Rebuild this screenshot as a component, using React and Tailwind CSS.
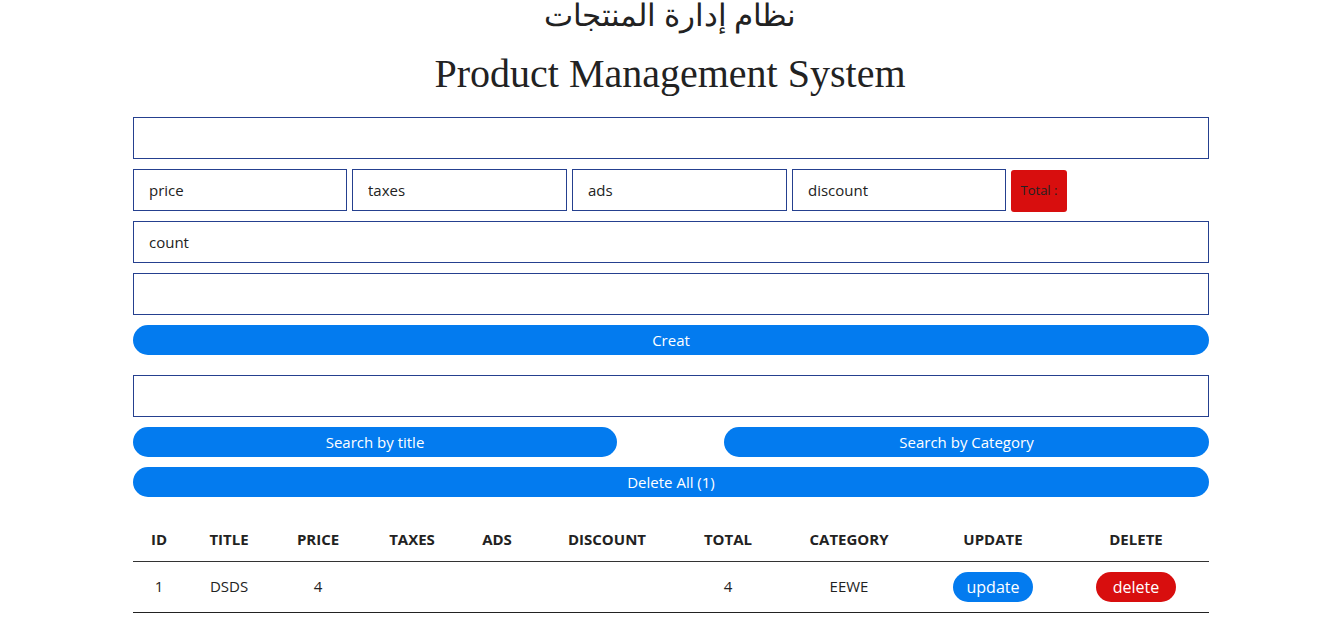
import React from "react";

const rows = [
  { id: 1, title: "DSDS", price: "4", taxes: "", ads: "", discount: "", total: "4", category: "EEWE" },
];

const cols = [
  { key: "id", label: "ID", w: "w-[52px]" },
  { key: "title", label: "TITLE", w: "w-[88px]" },
  { key: "price", label: "PRICE", w: "w-[90px]" },
  { key: "taxes", label: "TAXES", w: "w-[98px]" },
  { key: "ads", label: "ADS", w: "w-[72px]" },
  { key: "discount", label: "DISCOUNT", w: "w-[148px]" },
  { key: "total", label: "TOTAL", w: "w-[94px]" },
  { key: "category", label: "CATEGORY", w: "w-[148px]" },
];

function Field({ placeholder = "", className = "" }) {
  return (
    <input
      type="text"
      placeholder={placeholder}
      className={`h-[42px] border border-[#25408f] bg-white px-[15px] text-[15px] text-[#222] placeholder:text-[#222] outline-none ${className}`}
    />
  );
}

function PillButton({ children, className = "" }) {
  return (
    <button className={`h-[30px] rounded-full bg-[#037bef] text-[15px] text-white ${className}`}>
      {children}
    </button>
  );
}

export default function App() {
  return (
    <div className="min-h-screen bg-white font-['Open_Sans',sans-serif] text-[#222]">
      {/* header */}
      <div className="text-center font-['Liberation_Serif','DejaVu_Serif',serif] text-[#222]">
        <h1 className="h-[32px] text-[31px] leading-[32px]" dir="rtl">
          نظام إدارة المنتجات
        </h1>
        <h2 className="mt-[20px] text-[40px] leading-[44px]">Product Management System</h2>
      </div>

      <div className="mt-[21px] ml-[133px] w-[1076px]">
        {/* form */}
        <div className="flex flex-col gap-[10px]">
          <Field className="w-full" />
          <div className="flex items-start gap-[5px]">
            <Field placeholder="price" className="w-[214px]" />
            <Field placeholder="taxes" className="w-[215px]" />
            <Field placeholder="ads" className="w-[215px]" />
            <Field placeholder="discount" className="w-[214px]" />
            <div className="mt-[1px] -mb-[1px] flex h-[42px] w-[56px] items-center justify-center rounded-[3px] bg-[#d80e0e] text-[13px] text-[#222]">
              Total :
            </div>
          </div>
          <Field placeholder="count" className="w-full" />
          <Field className="w-full" />
          <PillButton className="w-full">Creat</PillButton>
        </div>

        {/* search */}
        <div className="mt-[20px] flex flex-col gap-[10px]">
          <Field className="w-full" />
          <div className="flex justify-between">
            <PillButton className="w-[484px]">Search by title</PillButton>
            <PillButton className="w-[485px]">Search by Category</PillButton>
          </div>
          <PillButton className="w-full">Delete All (1)</PillButton>
        </div>

        {/* table */}
        <table className="mt-[20px] w-full table-fixed border-collapse text-[15px]">
          <thead>
            <tr className="h-[44px] border-b border-[#333]">
              {cols.map((c) => (
                <th key={c.key} className={`${c.w} text-center font-bold`}>
                  {c.label}
                </th>
              ))}
              <th className="w-[140px] text-center font-bold">UPDATE</th>
              <th className="w-[146px] text-center font-bold">DELETE</th>
            </tr>
          </thead>
          <tbody>
            {rows.map((r) => (
              <tr key={r.id} className="h-[51px] border-b border-[#222]">
                {cols.map((c) => (
                  <td key={c.key} className="text-center">
                    {r[c.key]}
                  </td>
                ))}
                <td className="text-center">
                  <button className="h-[30px] w-[80px] rounded-full bg-[#037bef] text-[16px] text-white">update</button>
                </td>
                <td className="text-center">
                  <button className="h-[30px] w-[80px] rounded-full bg-[#d80e0e] text-[16px] text-white">delete</button>
                </td>
              </tr>
            ))}
          </tbody>
        </table>
      </div>
    </div>
  );
}
